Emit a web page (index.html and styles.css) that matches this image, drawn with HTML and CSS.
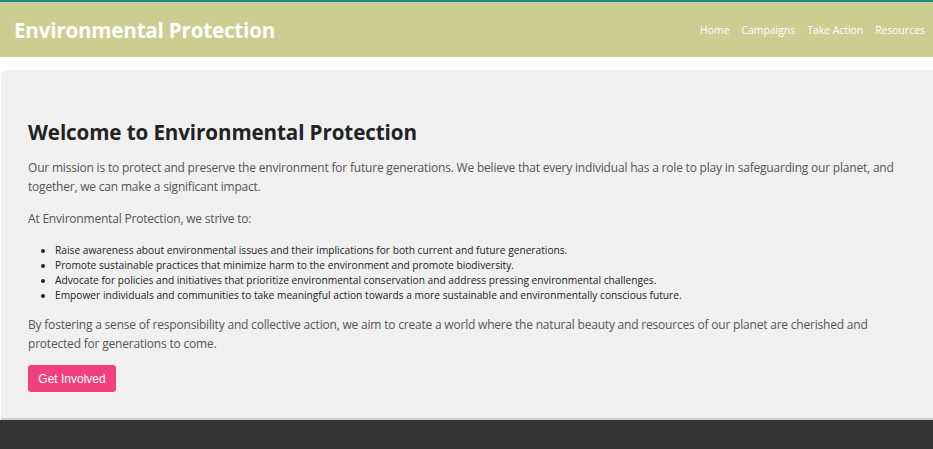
FILE: index.html
```html
<!DOCTYPE html>
<html lang="en">
<head>
<meta charset="utf-8">
<title>Environmental Protection</title>
<link rel="stylesheet" href="styles.css">
</head>
<body>
<header class="site-header">
  <div class="brand">Environmental Protection</div>
  <nav class="nav">
    <a href="#">Home</a>
    <a href="#">Campaigns</a>
    <a href="#">Take Action</a>
    <a href="#">Resources</a>
  </nav>
</header>
<main class="content">
  <h1 class="title">Welcome to Environmental Protection</h1>
  <p class="text">Our mission is to protect and preserve the environment for future generations. We believe that every individual has a role to play in safeguarding our planet, and together, we can make a significant impact.</p>
  <p class="text">At Environmental Protection, we strive to:</p>
  <ul class="goals">
    <li>Raise awareness about environmental issues and their implications for both current and future generations.</li>
    <li>Promote sustainable practices that minimize harm to the environment and promote biodiversity.</li>
    <li>Advocate for policies and initiatives that prioritize environmental conservation and address pressing environmental challenges.</li>
    <li>Empower individuals and communities to take meaningful action towards a more sustainable and environmentally conscious future.</li>
  </ul>
  <p class="text last">By fostering a sense of responsibility and collective action, we aim to create a world where the natural beauty and resources of our planet are cherished and protected for generations to come.</p>
  <button class="cta" type="button">Get Involved</button>
</main>
<footer class="site-footer"></footer>
</body>
</html>
```
FILE: styles.css
```css
* { box-sizing: border-box; }
html, body { margin: 0; padding: 0; }
body {
  font-family: "Open Sans", "Noto Sans", sans-serif;
  background: #ffffff;
  height: 449px;
  overflow: hidden;
}
.site-header {
  border-top: 2px solid #1f8f7f;
  background: #cbcd91;
  height: 57px;
  display: flex;
  align-items: center;
  justify-content: space-between;
  padding: 0 8px 0 14px;
}
.brand {
  color: #ffffff;
  font-weight: 700;
  font-size: 20.6px;
  letter-spacing: -0.2px;
}
.nav {
  display: flex;
  gap: 12px;
}
.nav a {
  color: #ffffff;
  text-decoration: none;
  font-size: 10.4px;
}
.content {
  margin-top: 13px;
  margin-left: 1px;
  background: #f0f0f0;
  border-radius: 6px 0 0 0;
  height: 350px;
  padding: 48px 20px 0 27px;
  border-bottom: 2px solid #cfcfcf;
}
.title {
  margin: 0 0 12px;
  font-size: 20.6px;
  font-weight: 700;
  color: #222222;
  letter-spacing: -0.1px;
}
.text {
  margin: 0 0 13px;
  font-size: 12px;
  letter-spacing: -0.2px;
  line-height: 19px;
  color: #555555;
}
.goals {
  margin: 15px 0 12px;
  padding-left: 27px;
  font-size: 10.2px;
  line-height: 15px;
  color: #222222;
}
.goals li {
  height: 15px;
}
.text.last {
  margin-bottom: 12px;
}
.cta {
  background: #f23f7e;
  color: #ffffff;
  border: none;
  border-radius: 3px;
  font-family: "Liberation Sans", Arial, sans-serif;
  font-size: 12px;
  width: 88px;
  height: 27px;
  padding: 0;
}
.site-footer {
  background: #333333;
  height: 40px;
}
```
